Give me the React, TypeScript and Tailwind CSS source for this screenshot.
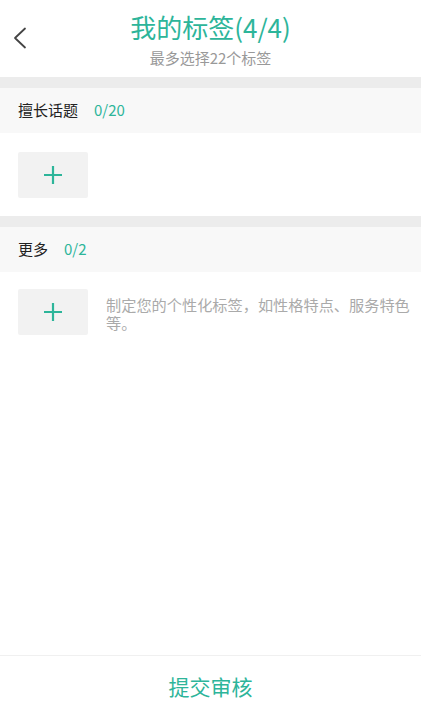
const FONT = { fontFamily: '"Noto Sans CJK SC", Roboto, sans-serif' }

function PlusBox() {
  return (
    <button className="w-[70px] h-[46px] shrink-0 rounded-[2px] bg-[#f2f2f2] flex items-center justify-center">
      <svg width="20" height="20" viewBox="0 0 20 20">
        <path d="M10 1v18M1 10h18" stroke="#2db59a" strokeWidth="2.2" />
      </svg>
    </button>
  )
}

function SectionHeader({ title, count }: { title: string; count: string }) {
  return (
    <div className="h-[45px] bg-[#f8f8f8] flex items-center px-[18px] gap-4 text-[15px]">
      <span className="text-[#222]">{title}</span>
      <span className="text-[#2db59a]">{count}</span>
    </div>
  )
}

export default function App() {
  return (
    <div className="w-[421px] h-[718px] flex flex-col bg-white" style={FONT}>
      {/* Top bar */}
      <div className="relative h-[77px] shrink-0 flex flex-col items-center pt-[8px]">
        <button className="absolute left-[13px] top-[27px]">
          <svg width="14" height="22" viewBox="0 0 14 22" fill="none">
            <path d="M12 1.5 2 11l10 9.5" stroke="#444" strokeWidth="1.8" strokeLinecap="round" strokeLinejoin="round" />
          </svg>
        </button>
        <h1 className="text-[26px] leading-[38px] text-[#2db59a]">我的标签(4/4)</h1>
        <p className="text-[15px] leading-[22px] text-[#999] mt-[1px]">最多选择22个标签</p>
      </div>

      <div className="h-[11px] bg-[#ececec] shrink-0" />
      <SectionHeader title="擅长话题" count="0/20" />
      <div className="h-[83px] shrink-0 flex items-center px-[18px]">
        <PlusBox />
      </div>

      <div className="h-[11px] bg-[#ececec] shrink-0" />
      <SectionHeader title="更多" count="0/2" />
      <div className="flex items-start gap-[18px] pl-[18px] pr-[6px] pt-[17px]">
        <PlusBox />
        <p className="text-[15.2px] leading-[18px] text-[#aaa] pt-[6px]">
          制定您的个性化标签，如性格特点、服务特色等。
        </p>
      </div>

      <div className="flex-1" />

      {/* Submit */}
      <div className="h-[63px] shrink-0 border-t border-[#f0f0f0] flex items-center justify-center">
        <button className="text-[21px] text-[#2db59a]">提交审核</button>
      </div>
    </div>
  )
}
